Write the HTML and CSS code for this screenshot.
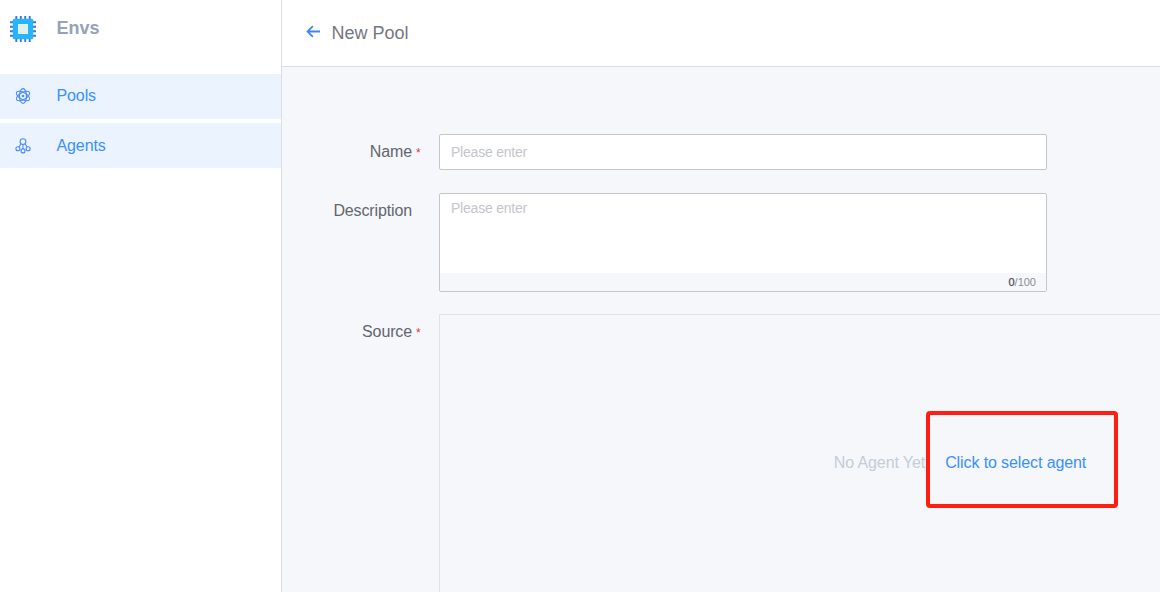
FILE: index.html
```html
<!DOCTYPE html>
<html lang="en">
<head>
<meta charset="utf-8">
<title>New Pool</title>
<link rel="stylesheet" href="styles.css">
</head>
<body>
<div class="app">
  <aside class="sidebar">
    <div class="brand">
      <svg class="brand-icon" viewBox="0 0 26 26">
        <path d="M6.3 0v26M10.8 0v26M15.2 0v26M19.7 0v26M0 6.3h26M0 10.8h26M0 15.2h26M0 19.7h26" stroke="#4b6fd8" stroke-width="1.9"/>
        <rect x="2.8" y="2.8" width="20.4" height="20.4" rx="1.5" fill="#25b5fd"/>
        <rect x="8" y="8" width="10" height="10" fill="#e2f0ea"/>
      </svg>
      <span>Envs</span>
    </div>
    <nav class="nav">
      <a class="nav-item">
        <svg class="nav-icon nav-icon-pools" viewBox="0 0 16 16">
          <ellipse cx="8" cy="8" rx="3.5" ry="7.4"/>
          <ellipse cx="8" cy="8" rx="3.5" ry="7.4" transform="rotate(60 8 8)"/>
          <ellipse cx="8" cy="8" rx="3.5" ry="7.4" transform="rotate(120 8 8)"/>
          <circle cx="8" cy="8" r=".8"/>
        </svg>
        <span class="nav-text">Pools</span>
      </a>
      <a class="nav-item">
        <svg class="nav-icon" viewBox="0 0 16 16">
          <circle cx="8" cy="3.6" r="2.9"/>
          <circle cx="2.9" cy="10.8" r="2"/>
          <circle cx="8" cy="12.9" r="2"/>
          <circle cx="13.1" cy="10.8" r="2"/>
          <path d="M8 6.5v4.4M6 5.8 4 9M10 5.8 12 9"/>
        </svg>
        <span class="nav-text nav-text-agents">Agents</span>
      </a>
    </nav>
  </aside>
  <main class="main">
    <header class="header">
      <svg class="back" viewBox="0 0 16 14"><path d="M15 7H2M7.3 1.3 1.6 7l5.7 5.7"/></svg>
      <h1 class="title">New Pool</h1>
    </header>
    <form class="form">
      <div class="row row-name">
        <label class="label">Name<span class="star">*</span></label>
        <div class="input">Please enter</div>
      </div>
      <div class="row row-desc">
        <label class="label">Description</label>
        <div class="textarea">
          <div class="placeholder">Please enter</div>
          <div class="counter"><span class="count">0</span>/100</div>
        </div>
      </div>
      <div class="row row-source">
        <label class="label">Source<span class="star">*</span></label>
        <div class="source"><span class="empty">No Agent Yet</span><a class="select">Click to select agent<span class="highlight"></span></a></div>
      </div>
    </form>
  </main>
</div>
</body>
</html>
```

FILE: styles.css
```css
* { box-sizing: border-box; }
body {
  margin: 0;
  font: 16px/20px "Liberation Sans", Arial, sans-serif;
  color: #63656e;
}
.app { display: flex; height: 592px; overflow: hidden; background: #f5f7fb; }
.sidebar { flex: none; width: 282px; background: #fff; border-right: 1px solid #dcdee5; }
.brand {
  display: flex;
  align-items: center;
  gap: 20.5px;
  height: 74px;
  padding: 0 0 17px 10px;
  color: #96a2b9;
  font-size: 18px;
  font-weight: bold;
}
.brand-icon { width: 26px; height: 26px; }
.brand span { margin-top: -1px; }
.nav { display: flex; flex-direction: column; gap: 4px; }
.nav-item {
  display: flex;
  align-items: center;
  gap: 25.5px;
  height: 45px;
  padding-left: 15px;
  background: #ebf3ff;
  color: #3a90ff;
}
.nav-text { margin-top: -2px; letter-spacing: -0.1px; }
.nav-text-agents { margin-top: 0; }
.nav-icon { width: 16px; height: 16px; fill: none; stroke: #4a8cf8; stroke-width: 1.1; }
.nav-icon-pools { margin-top: -1px; }
.main { flex: 1; min-width: 0; overflow: hidden; }
.header {
  display: flex;
  align-items: center;
  gap: 10.5px;
  height: 67px;
  padding-left: 24px;
  background: #fff;
  border-bottom: 1px solid #dcdee5;
}
.back { width: 15px; height: 13px; margin-top: -4px; fill: none; stroke: #3a84ff; stroke-width: 1.9; }
.title { margin: 0; font-size: 18px; font-weight: normal; color: #75777f; }
.form { height: 525px; padding-top: 67px; overflow: hidden; }
.row { display: flex; }
.label {
  position: relative;
  flex: none;
  width: 130px;
  margin-right: 27px;
  text-align: right;
  letter-spacing: -0.13px;
}
.star { position: absolute; left: 134px; color: #ea3636; font-size: 12px; }
.row-name { height: 36px; margin-bottom: 23px; }
.row-name .label { padding-top: 8px; }
.row-name .star { top: 9px; }
.input, .textarea { width: 608px; background: #fff; border: 1px solid #c4c6cc; border-radius: 2px; }
.input, .placeholder { color: #c4c6cc; font-size: 14px; letter-spacing: -0.22px; }
.input { padding: 7px 11px; }
.row-desc { height: 99px; margin-bottom: 22px; }
.row-desc .label { padding-top: 8px; }
.textarea { display: flex; flex-direction: column; }
.placeholder { flex: 1; padding: 4px 11px; }
.counter {
  height: 18px;
  padding-right: 10px;
  background: #f5f7fb;
  color: #8b8e97;
  font-size: 11px;
  line-height: 18px;
  text-align: right;
}
.count { color: #4c4e57; -webkit-text-stroke: 0.25px #4c4e57; }
.row-source { height: 278px; overflow: hidden; }
.row-source .label { padding-top: 8px; }
.row-source .star { top: 9px; }
.source {
  display: flex;
  flex: none;
  justify-content: center;
  gap: 20px;
  width: 1042px;
  height: 340px;
  padding-top: 138px;
  border: 1px solid #dde4eb;
}
.empty { color: #c3cdd7; letter-spacing: -0.1px; }
.select { position: relative; height: 20px; color: #3a90ff; letter-spacing: -0.1px; }
.highlight {
  position: absolute;
  left: -19px;
  top: -42px;
  width: 192px;
  height: 97px;
  border: 4px solid #ff1e10;
  border-radius: 4px;
}
```
